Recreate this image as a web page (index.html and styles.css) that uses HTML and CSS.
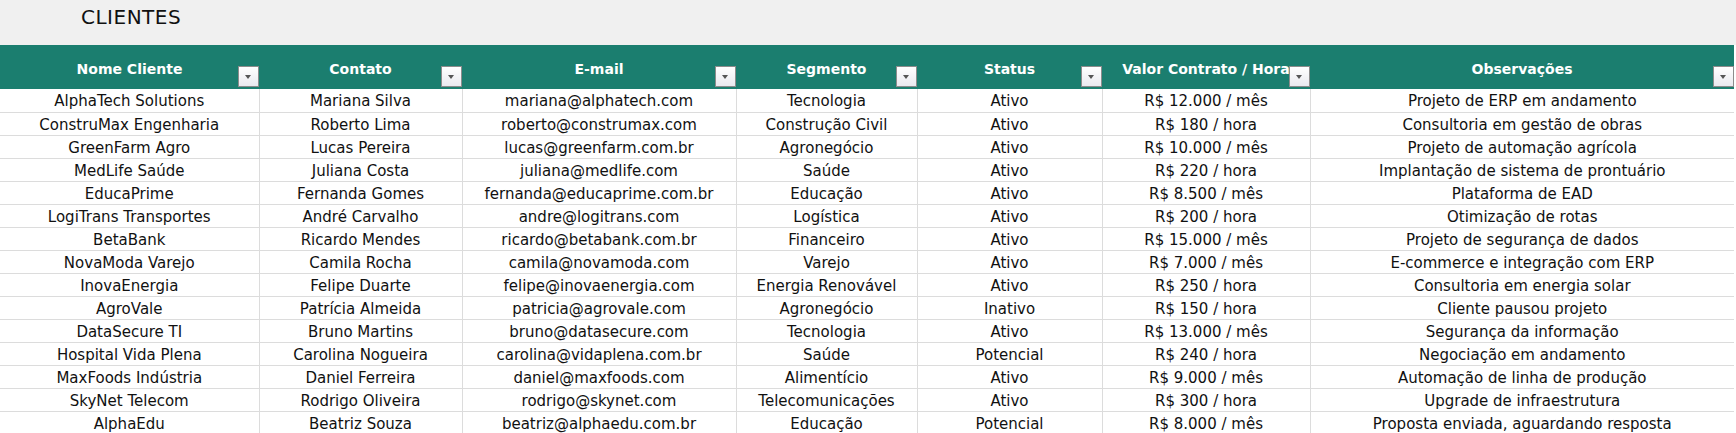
FILE: index.html
```html
<!DOCTYPE html>
<html lang="pt-BR">
<head>
<meta charset="utf-8">
<title>Clientes</title>
<link rel="stylesheet" href="styles.css">
</head>
<body>
<div class="sheet">
  <div class="title-bar"><h1 class="title">CLIENTES</h1></div>
  <table class="grid">
    <colgroup>
      <col class="c1"><col class="c2"><col class="c3"><col class="c4"><col class="c5"><col class="c6"><col class="c7">
    </colgroup>
    <thead>
      <tr>
        <th><span class="hd">Nome Cliente</span><span class="filter"></span></th>
        <th><span class="hd">Contato</span><span class="filter"></span></th>
        <th><span class="hd">E-mail</span><span class="filter"></span></th>
        <th><span class="hd">Segmento</span><span class="filter"></span></th>
        <th><span class="hd">Status</span><span class="filter"></span></th>
        <th><span class="hd">Valor Contrato / Hora</span><span class="filter"></span></th>
        <th><span class="hd">Observações</span><span class="filter"></span></th>
      </tr>
    </thead>
    <tbody>
      <tr><td>AlphaTech Solutions</td><td>Mariana Silva</td><td>mariana@alphatech.com</td><td>Tecnologia</td><td>Ativo</td><td>R$ 12.000 / mês</td><td>Projeto de ERP em andamento</td></tr>
      <tr><td>ConstruMax Engenharia</td><td>Roberto Lima</td><td>roberto@construmax.com</td><td>Construção Civil</td><td>Ativo</td><td>R$ 180 / hora</td><td>Consultoria em gestão de obras</td></tr>
      <tr><td>GreenFarm Agro</td><td>Lucas Pereira</td><td>lucas@greenfarm.com.br</td><td>Agronegócio</td><td>Ativo</td><td>R$ 10.000 / mês</td><td>Projeto de automação agrícola</td></tr>
      <tr><td>MedLife Saúde</td><td>Juliana Costa</td><td>juliana@medlife.com</td><td>Saúde</td><td>Ativo</td><td>R$ 220 / hora</td><td>Implantação de sistema de prontuário</td></tr>
      <tr><td>EducaPrime</td><td>Fernanda Gomes</td><td>fernanda@educaprime.com.br</td><td>Educação</td><td>Ativo</td><td>R$ 8.500 / mês</td><td>Plataforma de EAD</td></tr>
      <tr><td>LogiTrans Transportes</td><td>André Carvalho</td><td>andre@logitrans.com</td><td>Logística</td><td>Ativo</td><td>R$ 200 / hora</td><td>Otimização de rotas</td></tr>
      <tr><td>BetaBank</td><td>Ricardo Mendes</td><td>ricardo@betabank.com.br</td><td>Financeiro</td><td>Ativo</td><td>R$ 15.000 / mês</td><td>Projeto de segurança de dados</td></tr>
      <tr><td>NovaModa Varejo</td><td>Camila Rocha</td><td>camila@novamoda.com</td><td>Varejo</td><td>Ativo</td><td>R$ 7.000 / mês</td><td>E-commerce e integração com ERP</td></tr>
      <tr><td>InovaEnergia</td><td>Felipe Duarte</td><td>felipe@inovaenergia.com</td><td>Energia Renovável</td><td>Ativo</td><td>R$ 250 / hora</td><td>Consultoria em energia solar</td></tr>
      <tr><td>AgroVale</td><td>Patrícia Almeida</td><td>patricia@agrovale.com</td><td>Agronegócio</td><td>Inativo</td><td>R$ 150 / hora</td><td>Cliente pausou projeto</td></tr>
      <tr><td>DataSecure TI</td><td>Bruno Martins</td><td>bruno@datasecure.com</td><td>Tecnologia</td><td>Ativo</td><td>R$ 13.000 / mês</td><td>Segurança da informação</td></tr>
      <tr><td>Hospital Vida Plena</td><td>Carolina Nogueira</td><td>carolina@vidaplena.com.br</td><td>Saúde</td><td>Potencial</td><td>R$ 240 / hora</td><td>Negociação em andamento</td></tr>
      <tr><td>MaxFoods Indústria</td><td>Daniel Ferreira</td><td>daniel@maxfoods.com</td><td>Alimentício</td><td>Ativo</td><td>R$ 9.000 / mês</td><td>Automação de linha de produção</td></tr>
      <tr><td>SkyNet Telecom</td><td>Rodrigo Oliveira</td><td>rodrigo@skynet.com</td><td>Telecomunicações</td><td>Ativo</td><td>R$ 300 / hora</td><td>Upgrade de infraestrutura</td></tr>
      <tr><td>AlphaEdu</td><td>Beatriz Souza</td><td>beatriz@alphaedu.com.br</td><td>Educação</td><td>Potencial</td><td>R$ 8.000 / mês</td><td>Proposta enviada, aguardando resposta</td></tr>
    </tbody>
  </table>
</div>
</body>
</html>
```

FILE: styles.css
```css
* { box-sizing: border-box; }
html, body { margin: 0; padding: 0; background: #ffffff; }
body { font-family: "DejaVu Sans", "Liberation Sans", sans-serif; color: #111; overflow: hidden; }

.sheet { width: 1736px; }

.title-bar {
  height: 45px;
  background: #f0f0f0;
  padding-left: 81px;
  padding-top: 7px;
}
.title {
  margin: 0;
  font-size: 20px;
  font-weight: normal;
  letter-spacing: 0.5px;
  color: #111;
  line-height: 20px;
}

.grid {
  border-collapse: collapse;
  table-layout: fixed;
  width: 1734px;
}
.c1 { width: 259px; }
.c2 { width: 203px; }
.c3 { width: 274px; }
.c4 { width: 181px; }
.c5 { width: 185px; }
.c6 { width: 208px; }
.c7 { width: 424px; }

.grid th {
  position: relative;
  height: 44px;
  padding: 3px 0 0;
  background: #1b7e6f;
  color: #ffffff;
  font-size: 14px;
  font-weight: bold;
  text-align: center;
  white-space: nowrap;
  overflow: hidden;
  border: none;
}

.filter {
  position: absolute;
  right: 0;
  bottom: 2px;
  width: 21px;
  height: 21px;
  border: 1px solid #8c8c8c;
  background: linear-gradient(#ffffff, #e9e9ef);
}
.filter::after {
  content: "";
  position: absolute;
  left: 6px;
  top: 8px;
  border-left: 3.5px solid transparent;
  border-right: 3.5px solid transparent;
  border-top: 4px solid #555;
}

.grid td {
  height: 23px;
  padding: 2px 0 0;
  font-size: 15px;
  line-height: 20px;
  text-align: center;
  white-space: nowrap;
  overflow: hidden;
  border-right: 1px solid #dcdcdc;
  border-bottom: 1px solid #dcdcdc;
  color: #111;
}
.grid td:last-child { border-right: none; }
```
